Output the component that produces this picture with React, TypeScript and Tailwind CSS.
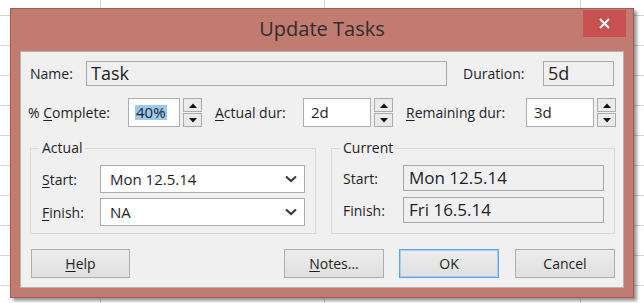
import type { ReactNode } from "react";

const font = "font-['Open_Sans','Noto_Sans',sans-serif]";

function Key({ children }: { children: ReactNode }) {
  return <span className="underline underline-offset-[2px] decoration-1">{children}</span>;
}

function Spinner() {
  return (
    <div className="ml-[3px] flex h-[29px] w-[19px] flex-col gap-[1px]">
      <div className="flex h-[14px] items-center justify-center border border-[#acacac] bg-[#eaeaea]">
        <svg width="8" height="5" viewBox="0 0 8 5">
          <path d="M0 5 L4 0.5 L8 5 Z" fill="#111" />
        </svg>
      </div>
      <div className="flex h-[14px] items-center justify-center border border-[#acacac] bg-[#eaeaea]">
        <svg width="8" height="5" viewBox="0 0 8 5">
          <path d="M0 0 L4 4.5 L8 0 Z" fill="#111" />
        </svg>
      </div>
    </div>
  );
}

function Chevron() {
  return (
    <svg width="12" height="8" viewBox="0 0 12 8" className="mr-[7px]">
      <path d="M1 1.5 L6 6 L11 1.5" fill="none" stroke="#3a3a3a" strokeWidth="2.2" />
    </svg>
  );
}

function Button({ children, primary }: { children: ReactNode; primary?: boolean }) {
  return (
    <div
      className={`flex h-[29px] items-center justify-center border bg-[linear-gradient(#ececec,#e0e0e0)] text-[14px] text-[#1e1e1e] ${
        primary ? "border-[#5fa4e8] shadow-[inset_0_0_0_1px_#a9cdf2]" : "border-[#adadad]"
      }`}
    >
      {children}
    </div>
  );
}

export default function App() {
  return (
    <div
      className={`${font} h-[303px] w-[644px] overflow-hidden bg-white bg-[image:linear-gradient(to_right,transparent_100px,#d6d6d6_100px_101px,transparent_101px_324px,#d6d6d6_324px_325px,transparent_325px_580px,#d6d6d6_580px_581px,transparent_581px),repeating-linear-gradient(to_bottom,transparent_0_15px,#d6d6d6_15px_16px,transparent_16px_30px)] pl-[10px] pt-[8px]`}
    >
      <div className="flex h-[290px] w-[624px] flex-col border border-[#a65a4f] bg-[#c27b71] shadow-[3px_3px_3px_rgba(0,0,0,0.4)]">
        {/* title bar */}
        <div className="relative flex h-[42px] shrink-0 items-center justify-center">
          <span className="mt-[-2px] text-[20px] text-[#2e2e2e]">Update Tasks</span>
          <div className="absolute right-[7px] top-[1px] flex h-[27px] w-[43px] items-center justify-center bg-[#c75050]">
            <svg width="11" height="11" viewBox="0 0 11 11">
              <path d="M1 1 L10 10 M10 1 L1 10" stroke="#fff" strokeWidth="2" />
            </svg>
          </div>
        </div>

        {/* client area */}
        <div className="mx-[9px] flex h-[237px] flex-col border border-[#b4b4b4] bg-[#f0f0f0] text-[14px] text-[#1e1e28]">
          {/* row 1 */}
          <div className="mt-[9px] flex h-[25px] items-center pl-[9px]">
            <span className="w-[56px]">Name:</span>
            <div className="flex h-[25px] w-[361px] items-center border border-[#a9a9a9] bg-[#f0f0f0] pl-[4px] text-[18px]">
              Task
            </div>
            <span className="ml-[16px] w-[80px]">Duration:</span>
            <div className="flex h-[25px] w-[71px] items-center border border-[#a9a9a9] bg-[#f0f0f0] pl-[4px] text-[18px]">
              5d
            </div>
          </div>

          {/* row 2 */}
          <div className="mt-[12px] flex h-[29px] items-center pl-[7px]">
            <span className="w-[100px]">
              % <Key>C</Key>omplete:
            </span>
            <div className="flex h-[29px] w-[52px] items-center border border-[#abadb3] bg-white pl-[6px] text-[15px]">
              <span className="bg-[#99c9ef] px-[1px] leading-[15px]">40%</span>
            </div>
            <Spinner />
            <span className="ml-[13px] w-[88px]">
              <Key>A</Key>ctual dur:
            </span>
            <div className="flex h-[29px] w-[68px] items-center border border-[#abadb3] bg-white pl-[7px] text-[15px]">
              2d
            </div>
            <Spinner />
            <span className="ml-[13px] w-[120px]">
              <Key>R</Key>emaining dur:
            </span>
            <div className="flex h-[29px] w-[68px] items-center border border-[#abadb3] bg-white pl-[7px] text-[15px]">
              3d
            </div>
            <Spinner />
          </div>

          {/* group boxes */}
          <div className="mt-[11px] flex pl-[9px]">
            <fieldset className="h-[96px] w-[286px] border border-[#d9d9d9] px-0">
              <legend className="ml-[8px] px-[3px] leading-[20px]">Actual</legend>
              <div className="flex flex-col gap-[5px] pl-[11px] pt-[7px]">
                <div className="flex h-[28px] items-center">
                  <span className="w-[58px]">
                    <Key>S</Key>tart:
                  </span>
                  <div className="flex h-[28px] w-[205px] items-center justify-between border border-[#acacac] bg-white pl-[9px] text-[15px]">
                    Mon 12.5.14
                    <Chevron />
                  </div>
                </div>
                <div className="flex h-[28px] items-center">
                  <span className="w-[58px]">
                    <Key>F</Key>inish:
                  </span>
                  <div className="flex h-[28px] w-[205px] items-center justify-between border border-[#acacac] bg-white pl-[9px] text-[15px]">
                    NA
                    <Chevron />
                  </div>
                </div>
              </div>
            </fieldset>
            <fieldset className="ml-[15px] h-[96px] w-[284px] border border-[#d9d9d9] px-0">
              <legend className="ml-[8px] px-[3px] leading-[20px]">Current</legend>
              <div className="flex flex-col gap-[6px] pl-[11px] pt-[7px]">
                <div className="flex h-[26px] items-center">
                  <span className="w-[60px]">Start:</span>
                  <div className="flex h-[26px] w-[201px] items-center border border-[#a9a9a9] bg-[#f0f0f0] pl-[5px] text-[17px]">
                    Mon 12.5.14
                  </div>
                </div>
                <div className="flex h-[26px] items-center">
                  <span className="w-[60px]">Finish:</span>
                  <div className="flex h-[26px] w-[201px] items-center border border-[#a9a9a9] bg-[#f0f0f0] pl-[5px] text-[17px]">
                    Fri 16.5.14
                  </div>
                </div>
              </div>
            </fieldset>
          </div>

          {/* buttons */}
          <div className="mt-[15px] flex pl-[10px]">
            <div className="w-[99px]">
              <Button>
                <Key>H</Key>elp
              </Button>
            </div>
            <div className="ml-[154px] w-[100px]">
              <Button>
                <Key>N</Key>otes...
              </Button>
            </div>
            <div className="ml-[15px] w-[100px]">
              <Button primary>OK</Button>
            </div>
            <div className="ml-[16px] w-[100px]">
              <Button>Cancel</Button>
            </div>
          </div>
        </div>
      </div>
    </div>
  );
}
